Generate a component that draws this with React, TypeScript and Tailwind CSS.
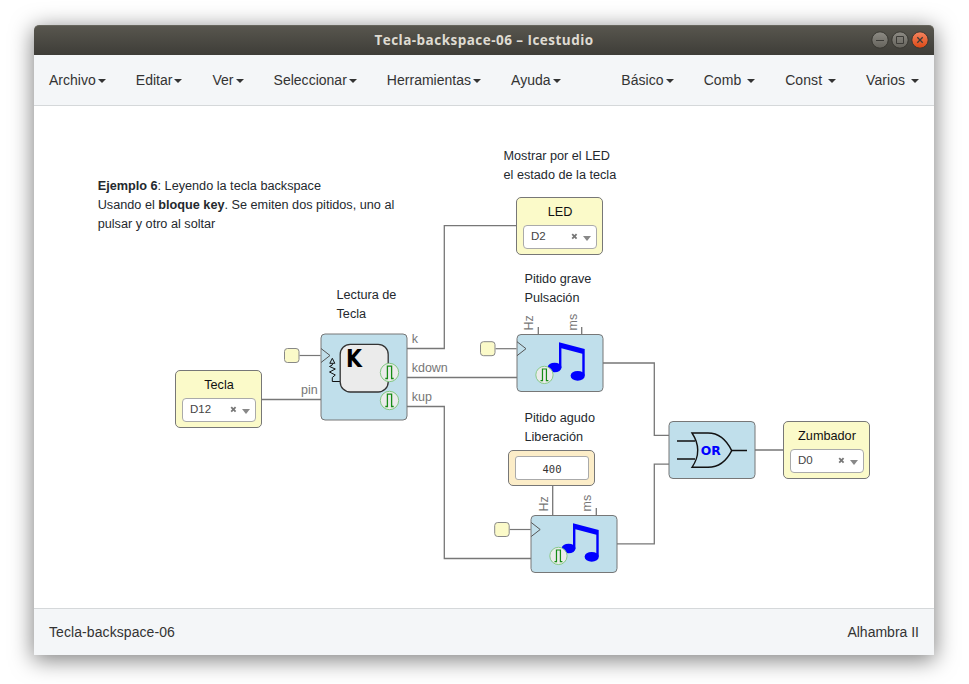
import React from "react";

const SANS = "font-['Liberation_Sans',Arial,sans-serif]";

function MenuItem({ label, spaced = false }: { label: string; spaced?: boolean }) {
  return (
    <div className="flex items-center whitespace-pre">
      <span>{spaced ? label + " " : label}</span>
      <span className="ml-[2px] mt-[1px] h-0 w-0 border-x-4 border-t-4 border-x-transparent border-t-[#333]" />
    </div>
  );
}

function TitleBar() {
  return (
    <header className="flex h-[30px] shrink-0 items-center rounded-t-[5px] border-t border-[#66655c] bg-linear-to-b from-[#58564e] to-[#3e3d38]">
      <div className="w-[66px]" />
      <h1 className="flex-1 text-center font-['Open_Sans','Noto_Sans',sans-serif] text-[13.5px] leading-none font-bold tracking-[0.47px] text-[#dfdbd2]">
        Tecla-backspace-06 – Icestudio
      </h1>
      <svg className="mb-px w-[66px]" height="20" viewBox="868 30 66 20" fill="none">
        <defs>
          <linearGradient id="gray" x1="0" y1="0" x2="0" y2="1">
            <stop stopColor="#8d8b84" />
            <stop offset="1" stopColor="#64625b" />
          </linearGradient>
          <linearGradient id="orange" x1="0" y1="0" x2="0" y2="1">
            <stop stopColor="#f58560" />
            <stop offset="1" stopColor="#dc4814" />
          </linearGradient>
        </defs>
        <circle cx="880" cy="40" r="8.2" fill="url(#gray)" stroke="#383731" />
        <circle cx="900" cy="40" r="8.2" fill="url(#gray)" stroke="#383731" />
        <circle cx="920" cy="40" r="8.2" fill="url(#orange)" stroke="#383731" />
        <path d="M876 40.5h8M896.5 36.5h7v7h-7z" stroke="#3c3b37" />
        <path d="M917.3 37.3l5.4 5.4M922.7 37.3l-5.4 5.4" stroke="#3c3b37" strokeWidth="1.3" />
      </svg>
    </header>
  );
}

function Note({ className, children }: { className: string; children: React.ReactNode }) {
  return (
    <div className={"absolute text-[12.68px] leading-[19px] whitespace-nowrap text-[#24292e] " + className}>
      {children}
    </div>
  );
}

function PinBlock({ className, name, pin }: { className: string; name: string; pin: string }) {
  return (
    <div
      className={
        "absolute flex h-[58px] w-[87px] flex-col rounded-[5px] border border-[#777] bg-[#fbfac9] pt-[6px] pr-[5px] pl-[6px] " +
        className
      }
    >
      <div className="text-center text-[12.7px] leading-[16px] text-[#111]">{name}</div>
      <div className="mt-[5px] flex h-6 items-center rounded-[4px] border border-[#aaa] bg-white pr-[5px] pl-[7px] text-[11.5px] text-[#444]">
        <span className="flex-1 leading-none">{pin}</span>
        <svg width="7" height="7" viewBox="0 0 7 7" className="mr-[5px] mb-px">
          <path d="M1.2 1.2l4.4 4.4M5.6 1.2L1.2 5.6" stroke="#777" strokeWidth="1.8" />
        </svg>
        <span className="mt-[3px] h-0 w-0 border-x-4 border-t-[5px] border-x-transparent border-t-[#888]" />
      </div>
    </div>
  );
}

function Pulse({ x, y }: { x: number; y: number }) {
  return (
    <g transform={`translate(${x} ${y})`}>
      <circle r="9.2" fill="#ebebeb" stroke="#82c882" />
      <path d="M-4.2 6H-2.1V-6.3H2.1V6H4.2" fill="none" stroke="#168c16" strokeWidth="1.3" />
    </g>
  );
}

function Frame({ x, y, h = 57 }: { x: number; y: number; h?: number }) {
  return <rect x={x} y={y} width="86" height={h} rx="4" fill="#c0dfeb" stroke="#777" />;
}

function ClockPort({ x, y }: { x: number; y: number }) {
  return (
    <g transform={`translate(${x} ${y})`} fill="none" stroke="#777">
      <path d="M-21 0H0" strokeWidth="1.2" />
      <rect x="-36" y="-7" width="14.5" height="14" rx="3" fill="#fbfac9" stroke="#888" />
      <path d="M0.5 -7L9.5 0L0.5 7" stroke="#555" />
    </g>
  );
}

function ToneBlock({ x, y }: { x: number; y: number }) {
  return (
    <g>
      <Frame x={x} y={y} />
      <g transform={`translate(${x} ${y})`} fill="#0000ff">
        <path d="M42 7.7L67.7 14.5V41H65.3V19.3L44.4 13.8V33H42Z" />
        <ellipse cx="37.6" cy="33" rx="6.9" ry="4.8" />
        <ellipse cx="60.7" cy="41.3" rx="7.1" ry="4.9" />
      </g>
      <g transform={`translate(${x} ${y}) scale(0.94)`}>
        <Pulse x={29.2} y={43} />
      </g>
    </g>
  );
}

function Diagram() {
  return (
    <svg className="absolute inset-0" width="900" height="502" viewBox="34 106 900 502">
      <g fill="none" stroke="#777" strokeWidth="1.3">
        <path d="M262 399.5H321M407 348.5H444.3V225.7H517M407 377.5H517M407 406.5H444.3V558.5H531" />
        <path d="M603 363H654.3V435.3H669M617 543.8H654.3V464.2H669M755 450H784" />
        <path d="M538.3 327V335M581.7 327V335M552.7 486V516M596.3 508V516" />
      </g>

      <Frame x={321} y={334} h={86} />
      <ClockPort x={320.5} y={355.5} />
      <path
        d="M340 381.5H332.3V377.5L335.3 375L329.5 372L335.3 369L329.5 366.5L332.3 365V363.5M332.3 358.3L329.8 363.3H334.8Z"
        fill="none"
        stroke="#111"
      />
      <rect x="340.2" y="344.4" width="48" height="47.6" rx="10" fill="#ebebeb" stroke="#333" strokeWidth="1.3" />
      <text
        x="346"
        y="367"
        fontSize="24.5"
        fontWeight="bold"
        textLength="16"
        lengthAdjust="spacingAndGlyphs"
        fontFamily="DejaVu Sans, sans-serif"
      >
        K
      </text>
      <Pulse x={389.5} y={372.5} />
      <Pulse x={389.5} y={400.5} />

      <ToneBlock x={517} y={334.5} />
      <ClockPort x={516.5} y={348.7} />
      <ToneBlock x={531} y={515.5} />
      <ClockPort x={530.7} y={529.5} />

      <Frame x={669} y={421.5} />
      <path d="M677 441H695M677 459H695M731.7 450.6H747" stroke="#111" strokeWidth="1.5" />
      <path
        d="M692 433H708C720 433 727 441 731.7 450.6C727 460 720 467.3 708 467.3H692Q703.5 450.5 692 433Z"
        fill="none"
        stroke="#111"
        strokeWidth="1.4"
      />
      <text
        x="700.7"
        y="455"
        fontSize="12.5"
        fontWeight="bold"
        fill="#0000ff"
        textLength="20"
        lengthAdjust="spacingAndGlyphs"
        fontFamily="DejaVu Sans, sans-serif"
      >
        OR
      </text>

      <g fill="#777" fontSize="12.5" fontFamily="Liberation Sans, Arial, sans-serif">
        <text x="301" y="394">pin</text>
        <text x="411.7" y="343">k</text>
        <text x="411.7" y="372">kdown</text>
        <text x="411.7" y="401">kup</text>
        <text transform="translate(533 330.5) rotate(-90)">Hz</text>
        <text transform="translate(576.5 330.5) rotate(-90)">ms</text>
        <text transform="translate(547.5 511.5) rotate(-90)">Hz</text>
        <text transform="translate(591 511.5) rotate(-90)">ms</text>
      </g>
    </svg>
  );
}

export default function App() {
  return (
    <div className={"h-[684px] w-[969px] overflow-hidden bg-white pt-[25px] pl-[34px] " + SANS}>
      <div className="flex h-[630px] w-[900px] flex-col rounded-t-[5px] bg-white shadow-[0_4px_22px_1px_rgba(0,0,0,0.5)]">
        <TitleBar />
        <nav className="flex h-[51px] shrink-0 items-center justify-between border-b border-[#d5d8da] bg-[#f4f6f8] px-[15px] text-[14px] text-[#333]">
          <div className="flex gap-[30px] tracking-[0.015px]">
            <MenuItem label="Archivo" />
            <MenuItem label="Editar" />
            <MenuItem label="Ver" />
            <MenuItem label="Seleccionar" />
            <MenuItem label="Herramientas" />
            <MenuItem label="Ayuda" />
          </div>
          <div className="flex gap-[30px] tracking-[0.06px]">
            <MenuItem label="Básico" />
            <MenuItem label="Comb" spaced />
            <MenuItem label="Const" spaced />
            <MenuItem label="Varios" spaced />
          </div>
        </nav>
        <main className="relative flex-1 bg-white">
          <Diagram />
          <Note className="top-[71px] left-[63.7px]">
            <b>Ejemplo 6</b>: Leyendo la tecla backspace
            <br />
            Usando el <b>bloque key</b>. Se emiten dos pitidos, uno al
            <br />
            pulsar y otro al soltar
          </Note>
          <Note className="top-[41px] left-[469.5px]">
            Mostrar por el LED
            <br />
            el estado de la tecla
          </Note>
          <Note className="top-[180px] left-[302.5px]">
            Lectura de
            <br />
            Tecla
          </Note>
          <Note className="top-[164px] left-[490.5px]">
            Pitido grave
            <br />
            Pulsación
          </Note>
          <Note className="top-[303px] left-[490.5px]">
            Pitido agudo
            <br />
            Liberación
          </Note>
          <PinBlock className="top-[264px] left-[141px]" name="Tecla" pin="D12" />
          <PinBlock className="top-[91px] left-[482px]" name="LED" pin="D2" />
          <PinBlock className="top-[315px] left-[749px]" name="Zumbador" pin="D0" />
          <div className="absolute top-[344px] left-[474px] flex h-9 w-[87px] rounded-[5px] border border-[#777] bg-[#fcedc8] py-[5px] pr-[5px] pl-[6px]">
            <div className="flex-1 rounded-[3px] border border-[#aaa] bg-white text-center font-['DejaVu_Sans_Mono',monospace] text-[10.5px] leading-[24px] text-[#333]">
              400
            </div>
          </div>
        </main>
        <footer className="flex h-[47px] shrink-0 items-center justify-between border-t border-[#d5d8da] bg-[#f4f6f8] px-[15px] text-[14px] text-[#333]">
          <span className="tracking-[0.08px]">Tecla-backspace-06</span>
          <span>Alhambra II</span>
        </footer>
      </div>
    </div>
  );
}
